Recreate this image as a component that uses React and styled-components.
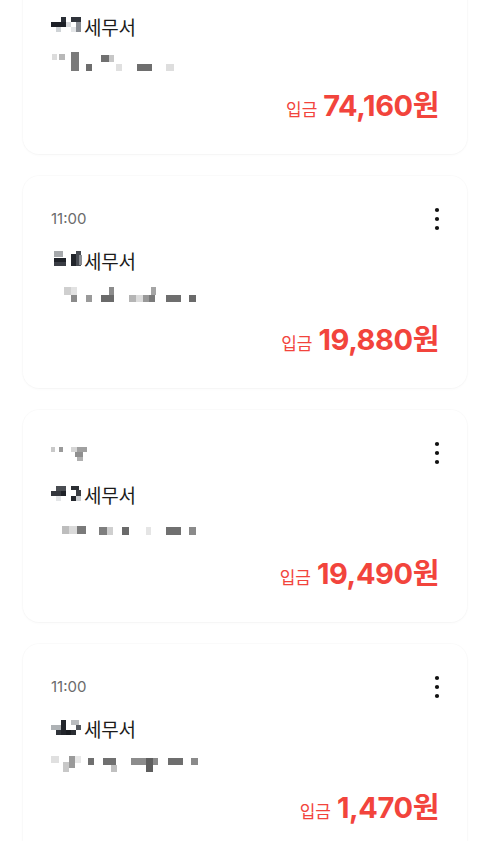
import styled, { createGlobalStyle } from "styled-components";

const GlobalStyle = createGlobalStyle`
  html, body {
    margin: 0;
    padding: 0;
    background: #ffffff;
  }

  body {
    font-family: Inter, "Noto Sans CJK KR", "Noto Sans", sans-serif;
    -webkit-font-smoothing: antialiased;
  }
`;

// blurred (mosaic) bits of the original text: [x, y, w, h, colour]
const entries = [
  {
    time: "11:00",
    name: [
      [0, 6, 15, 5, "#1c1f26"],
      [5, 11, 5, 5, "#cfd3d6"],
      [10, 1, 5, 5, "#2a2e36"],
      [15, 6, 5, 5, "#d8dadd"],
      [20, 1, 10, 5, "#30343b"],
      [25, 6, 5, 10, "#8a8e94"],
      [20, 11, 5, 5, "#e3e5e7"],
    ],
    sub: [
      [1, 2, 5, 6, "#dcdcdc"],
      [8, 2, 6, 6, "#b8b8b8"],
      [20, 0, 8, 19, "#7a7a7a"],
      [35, 12, 6, 7, "#6d6d6d"],
      [50, 3, 8, 7, "#707070"],
      [58, 3, 5, 7, "#c7c7c7"],
      [65, 12, 6, 7, "#e0e0e0"],
      [86, 12, 15, 7, "#6e6e6e"],
      [115, 12, 8, 7, "#dedede"],
    ],
    amount: "74,160",
  },
  {
    time: "11:00",
    name: [
      [3, 1, 9, 6, "#a6a9ac"],
      [3, 8, 12, 4, "#1e2128"],
      [3, 12, 12, 4, "#3a3d44"],
      [20, 4, 5, 12, "#22252b"],
      [25, 1, 5, 15, "#474b52"],
      [28, 5, 3, 10, "#8b8e93"],
    ],
    sub: [
      [13, 1, 8, 8, "#cfcfcf"],
      [20, 1, 6, 8, "#e2e2e2"],
      [20, 9, 6, 7, "#8a8a8a"],
      [35, 9, 6, 7, "#9a9a9a"],
      [58, 1, 5, 8, "#8c8c8c"],
      [50, 9, 13, 7, "#6a6a6a"],
      [78, 9, 7, 7, "#b5b5b5"],
      [85, 9, 7, 7, "#dcdcdc"],
      [92, 9, 6, 7, "#999999"],
      [98, 9, 6, 7, "#7a7a7a"],
      [100, 1, 5, 8, "#a5a5a5"],
      [115, 9, 15, 7, "#6e6e6e"],
      [138, 9, 7, 7, "#6a6a6a"],
    ],
    amount: "19,880",
  },
  {
    timeMosaic: [
      [0, 6, 4, 5, "#c9c9c9"],
      [8, 6, 4, 5, "#9a9a9a"],
      [20, 6, 6, 5, "#d5d5d5"],
      [26, 6, 10, 5, "#a0a0a0"],
      [24, 11, 8, 5, "#8f8f8f"],
      [26, 16, 6, 4, "#b0b0b0"],
    ],
    name: [
      [0, 7, 10, 5, "#34373d"],
      [5, 2, 10, 5, "#4a4d52"],
      [10, 7, 5, 5, "#1f2228"],
      [5, 12, 5, 5, "#e4e6e8"],
      [20, 2, 8, 4, "#2b2e33"],
      [25, 6, 5, 6, "#3b3e44"],
      [20, 12, 5, 5, "#23262c"],
      [25, 12, 5, 5, "#cdd0d3"],
    ],
    sub: [
      [11, 6, 7, 8, "#bdbdbd"],
      [18, 6, 8, 8, "#dadada"],
      [26, 6, 9, 8, "#7a7a7a"],
      [48, 7, 8, 8, "#7e7e7e"],
      [56, 7, 6, 8, "#cfcfcf"],
      [71, 7, 7, 8, "#6a6a6a"],
      [95, 7, 5, 8, "#e5e5e5"],
      [115, 7, 15, 8, "#707070"],
      [138, 7, 7, 8, "#8a8a8a"],
    ],
    amount: "19,490",
  },
  {
    time: "11:00",
    name: [
      [0, 7, 15, 5, "#aeb2b5"],
      [10, 2, 5, 15, "#22252b"],
      [5, 12, 5, 5, "#30343a"],
      [15, 12, 5, 5, "#1a1d22"],
      [20, 2, 8, 5, "#b9bcbf"],
      [20, 12, 5, 5, "#2a2d33"],
      [25, 7, 5, 5, "#555a60"],
    ],
    sub: [
      [0, 2, 8, 7, "#e0e0e0"],
      [12, 8, 6, 10, "#c8c8c8"],
      [18, 2, 6, 12, "#9a9a9a"],
      [24, 2, 6, 7, "#e8e8e8"],
      [37, 4, 6, 7, "#6f6f6f"],
      [52, 4, 13, 7, "#707070"],
      [60, 11, 6, 7, "#c0c0c0"],
      [80, 4, 15, 7, "#8c8c8c"],
      [95, 4, 7, 14, "#5f5f5f"],
      [102, 4, 5, 7, "#8a8a8a"],
      [117, 4, 15, 7, "#6e6e6e"],
      [140, 4, 7, 7, "#8a8a8a"],
    ],
    amount: "1,470",
  },
];

function Mosaic({ cells, width, height }) {
  return (
    <MosaicSvg width={width} height={height} viewBox={`0 0 ${width} ${height}`}>
      {cells.map(([x, y, w, h, fill], i) => (
        <rect key={i} x={x} y={y} width={w} height={h} fill={fill} />
      ))}
    </MosaicSvg>
  );
}

function MoreIcon() {
  return (
    <MoreButton aria-label="더보기">
      <svg width="6" height="24" viewBox="0 0 6 24">
        <circle cx="3" cy="3" r="2.1" fill="#111" />
        <circle cx="3" cy="12" r="2.1" fill="#111" />
        <circle cx="3" cy="21" r="2.1" fill="#111" />
      </svg>
    </MoreButton>
  );
}

function TransactionCard({ time, timeMosaic, name, sub, amount }) {
  return (
    <Card>
      <TopRow>
        {timeMosaic ? (
          <Mosaic cells={timeMosaic} width={40} height={24} />
        ) : (
          <Time>{time}</Time>
        )}
        <MoreIcon />
      </TopRow>

      <Name>
        <Mosaic cells={name} width={33} height={20} />
        세무서
      </Name>

      <Memo>
        <Mosaic cells={sub} width={150} height={20} />
      </Memo>

      <AmountRow>
        <AmountLabel>입금</AmountLabel>
        <AmountValue>{amount}원</AmountValue>
      </AmountRow>
    </Card>
  );
}

export default function App() {
  return (
    <>
      <GlobalStyle />
      <List>
        {entries.map((entry, i) => (
          <TransactionCard key={i} {...entry} />
        ))}
      </List>
    </>
  );
}

const List = styled.main`
  display: flex;
  flex-direction: column;
  gap: 22px;
  margin-top: -58px;
  padding: 0 23px 40px;
`;

const Card = styled.section`
  background: #ffffff;
  border-radius: 16px;
  padding: 31px 28px 36px 28px;
  box-shadow: 0 1px 3px rgba(0, 0, 0, 0.03), 0 0 0 1px rgba(0, 0, 0, 0.014);
`;

const TopRow = styled.div`
  display: flex;
  align-items: center;
  justify-content: space-between;
  height: 24px;
`;

const Time = styled.span`
  font-size: 15px;
  line-height: 24px;
  color: #6b6b6b;
`;

const MoreButton = styled.button`
  display: flex;
  align-items: center;
  justify-content: center;
  width: 20px;
  height: 24px;
  margin-right: -8px;
  padding: 0;
  border: none;
  background: none;
  cursor: pointer;
`;

const MosaicSvg = styled.svg`
  display: block;
  flex-shrink: 0;
`;

const Name = styled.div`
  display: flex;
  align-items: center;
  margin-top: 16px;
  height: 26px;
  font-size: 19px;
  color: #1b1b1b;
  letter-spacing: -0.2px;
`;

const Memo = styled.div`
  display: flex;
  align-items: center;
  margin-top: 13px;
  height: 20px;
`;

const AmountRow = styled.div`
  display: flex;
  align-items: baseline;
  justify-content: flex-end;
  gap: 6px;
  margin-top: 10px;
  height: 36px;
  color: #f2443c;
`;

const AmountLabel = styled.span`
  font-size: 17px;
`;

const AmountValue = styled.span`
  font-size: 29px;
  font-weight: 700;
  letter-spacing: -0.4px;
`;
